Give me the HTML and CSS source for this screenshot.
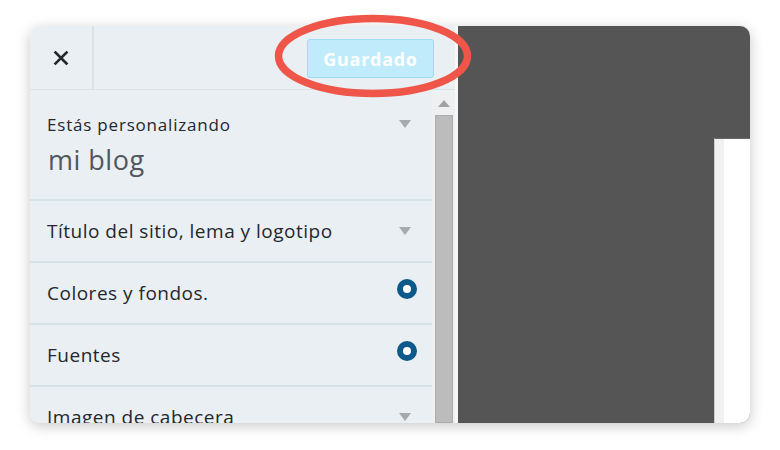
FILE: index.html
```html
<!DOCTYPE html>
<html lang="es">
<head>
    <meta charset="UTF-8">
    <title>Personalizar</title>
    <link rel="stylesheet" href="styles.css">
</head>
<body>
    <div class="stage">
        <div class="window">
            <aside class="sidebar">
                <header class="sidebar-head">
                    <button class="close-btn" type="button">
                        <svg width="16" height="16" viewBox="0 0 16 16"><path d="M2.5 2.5 L13.5 13.5 M13.5 2.5 L2.5 13.5" stroke="#23282d" stroke-width="2.6" stroke-linecap="square"/></svg>
                    </button>
                    <div class="head-actions">
                        <button class="save-btn" type="button">Guardado</button>
                    </div>
                </header>

                <div class="sidebar-body">
                    <div class="panel-list">
                        <div class="panel panel-info">
                            <div>
                                <p class="info-label">Estás personalizando</p>
                                <p class="info-title">mi blog</p>
                            </div>
                            <span class="arrow"></span>
                        </div>
                        <div class="panel">
                            <span>Título del sitio, lema y logotipo</span>
                            <span class="arrow"></span>
                        </div>
                        <div class="panel">
                            <span>Colores y fondos.</span>
                            <span class="dot"></span>
                        </div>
                        <div class="panel">
                            <span>Fuentes</span>
                            <span class="dot"></span>
                        </div>
                        <div class="panel">
                            <span>Imagen de cabecera</span>
                            <span class="arrow"></span>
                        </div>
                    </div>
                    <div class="scrollbar">
                        <span class="scroll-up"></span>
                        <span class="scroll-thumb"></span>
                    </div>
                </div>
            </aside>

            <section class="preview">
                <div class="preview-page"></div>
            </section>
        </div>

        <!-- highlight round the save button -->
        <svg class="highlight" width="200" height="86" viewBox="0 0 200 86">
            <ellipse cx="100" cy="43" rx="94.5" ry="37.5" fill="none" stroke="#ef5548" stroke-width="7.5"/>
        </svg>
    </div>
</body>
</html>
```

FILE: styles.css
```css
:root {
    --panel-bg: #eaeff3;
    --line-color: #d6e1e6;
    --text-color: #23282d;
    --accent: #0c5a8a;
}

* {
    margin: 0;
    padding: 0;
    box-sizing: border-box;
}

body {
    font-family: 'Open Sans', 'Noto Sans', Arial, sans-serif;
    background: #fff;
    color: var(--text-color);
}

.stage {
    position: relative;
    padding: 26px 30px 27px;
}

.window {
    display: flex;
    height: 397px;
    border-radius: 10px;
    overflow: hidden;
    box-shadow: 0 3px 14px rgba(0, 0, 0, 0.22);
}

.sidebar {
    width: 428px;
    display: flex;
    flex-direction: column;
    background: var(--panel-bg);
    border-right: 3px solid #f7f7f7;
}

.sidebar-head {
    display: flex;
    height: 64px;
    border-bottom: 1px solid #dce1e4;
    flex-shrink: 0;
}

.close-btn {
    width: 64px;
    border: none;
    border-right: 2px solid #dde2e5;
    background: transparent;
    display: flex;
    align-items: center;
    justify-content: center;
    padding-top: 1px;
}

.head-actions {
    flex: 1;
    display: flex;
    justify-content: flex-end;
    align-items: center;
    padding-right: 21px;
    padding-top: 2px;
}

.save-btn {
    width: 127px;
    height: 39px;
    border: 1px solid #9fdcf2;
    border-radius: 3px;
    background: #bfebfb;
    color: #fff;
    font-family: inherit;
    font-size: 18px;
    font-weight: 700;
    letter-spacing: 0.7px;
}

.sidebar-body {
    flex: 1;
    display: flex;
    min-height: 0;
}

.panel-list {
    width: 402px;
    overflow: hidden;
}

.panel {
    display: flex;
    justify-content: space-between;
    align-items: center;
    height: 62px;
    padding: 0 15px 0 17px;
    border-bottom: 2px solid var(--line-color);
    font-size: 19px;
    letter-spacing: 0.5px;
}

.panel-info {
    height: 111px;
    align-items: flex-start;
    padding-top: 23px;
}

.info-label {
    font-size: 17px;
    line-height: 24px;
    letter-spacing: 0.8px;
}

.info-title {
    font-size: 27px;
    line-height: 38px;
    color: #50575e;
    margin-top: 4px;
    margin-left: 1px;
}

.panel-info .arrow {
    margin-top: 7px;
}

.arrow {
    width: 0;
    height: 0;
    margin-right: 6px;
    border-left: 6px solid transparent;
    border-right: 6px solid transparent;
    border-top: 8px solid #a7aaad;
}

.dot {
    width: 20px;
    height: 20px;
    margin-top: -8px;
    border-radius: 50%;
    border: 6.5px solid var(--accent);
    background: #fff;
}

.scrollbar {
    flex: 1;
    display: flex;
    flex-direction: column;
    align-items: center;
    background: #eef0f1;
    padding-top: 10px;
}

.scroll-up {
    width: 0;
    height: 0;
    border-left: 6px solid transparent;
    border-right: 6px solid transparent;
    border-bottom: 7px solid #a3a3a3;
}

.scroll-thumb {
    flex: 1;
    width: 18px;
    margin-top: 8px;
    background: #bcbcbc;
    border: 1px solid #acacac;
}

.preview {
    flex: 1;
    display: flex;
    justify-content: flex-end;
    align-items: flex-end;
    background: #555;
}

.preview-page {
    width: 36px;
    height: 285px;
    background: #fff;
    border-top: 1px solid #6a6a6a;
    border-left: 1px solid #ccc;
    box-shadow: inset 9px 0 0 #f1f1f1;
}

.highlight {
    position: absolute;
    left: 273px;
    top: 13px;
}
```
